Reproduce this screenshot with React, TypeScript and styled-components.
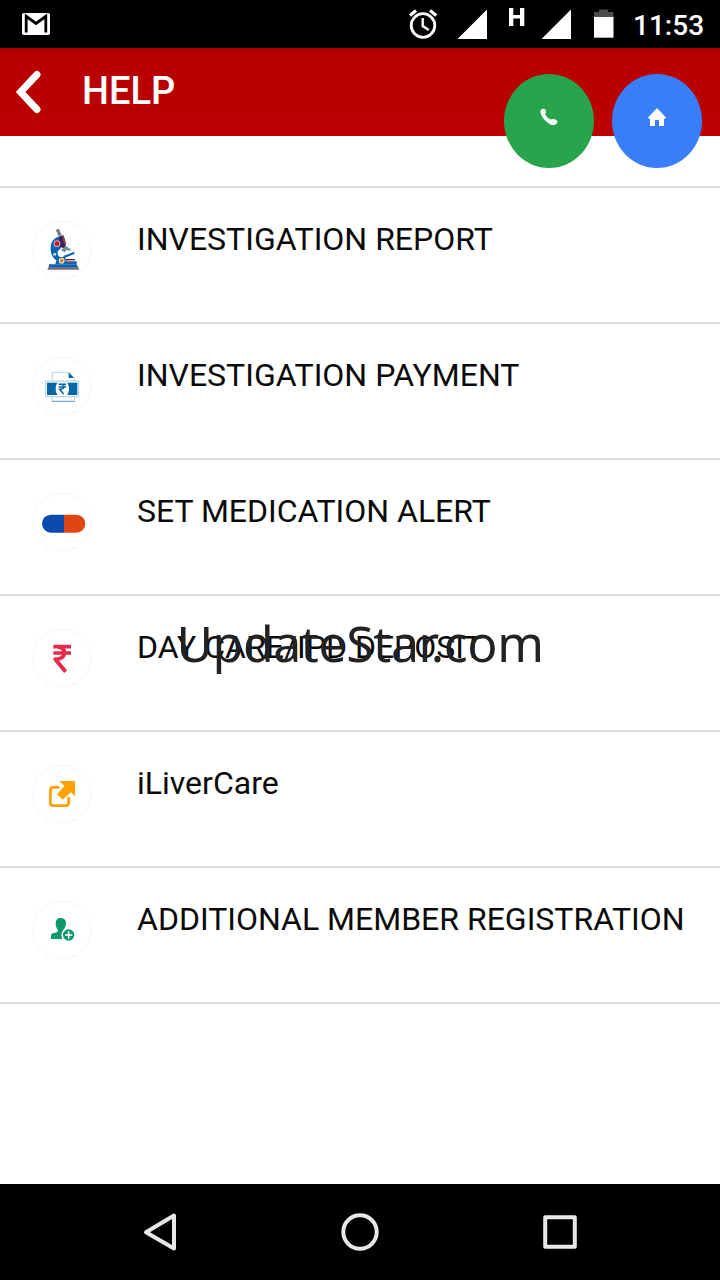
import React from 'react';
import styled, { createGlobalStyle } from 'styled-components';

const GlobalStyle = createGlobalStyle`
  * { box-sizing: border-box; }
  body { margin: 0; background: #fff; }
`;

const Screen = styled.div`
  position: relative;
  display: flex;
  flex-direction: column;
  width: 720px;
  height: 1280px;
  overflow: hidden;
  background: #fff;
  color: #0a0a0a;
  font-family: Roboto, "Liberation Sans", sans-serif;
`;

const StatusBar = styled.div`
  display: flex;
  align-items: center;
  justify-content: space-between;
  height: 48px;
  padding: 0 16px 0 22px;
  background: #000;
  color: #fff;
`;

const StatusGroup = styled.div`
  display: flex;
  align-items: center;
  height: 48px;
`;

const Time = styled.span`
  width: 71px;
  padding-top: 3px;
  font-size: 28px;
  font-weight: 500;
  line-height: 34px;
  white-space: nowrap;
`;

const Header = styled.header`
  display: flex;
  align-items: flex-start;
  height: 88px;
  padding: 0 18px 0 16px;
  background: linear-gradient(#a80000, #b90000 6px, #ba0000);
`;

const BackIcon = styled.svg`
  width: 26px;
  height: 44px;
  margin-top: 22px;
`;

const Title = styled.h1`
  flex: 1;
  margin: 20px 0 0 40px;
  color: #fff;
  font-size: 38px;
  font-weight: 500;
  line-height: 46px;
`;

const RoundButtons = styled.div`
  display: flex;
  gap: 18px;
  padding-top: 26px;
`;

const RoundButton = styled.button<{ $color: string }>`
  display: flex;
  justify-content: center;
  align-items: flex-start;
  width: 90px;
  height: 94px;
  padding: 34px 0 0;
  border: 0;
  border-radius: 50%;
  background: ${(p) => p.$color};
`;

const List = styled.ul`
  flex: 1;
  margin: 50px 0 0;
  padding: 0;
  list-style: none;
  border-top: 2px solid #dcdcdc;
  align-self: stretch;
`;

const Row = styled.li`
  display: flex;
  height: 136px;
  padding: 32px 0 0 32px;
  border-bottom: 2px solid #dcdcdc;
`;

const RowIcon = styled.svg`
  flex: none;
  width: 60px;
  height: 60px;
`;

const Label = styled.span`
  margin-left: 45px;
  font-size: 32px;
  line-height: 38px;
  white-space: nowrap;
`;

const Watermark = styled.div`
  position: absolute;
  top: 609px;
  left: 0;
  width: 720px;
  color: #222;
  font-family: "Noto Sans", "Open Sans", sans-serif;
  font-size: 50px;
  letter-spacing: -0.42px;
  line-height: 68px;
  text-align: center;
`;

const NavBar = styled.nav`
  display: flex;
  justify-content: space-between;
  align-items: center;
  height: 96px;
  padding: 0 140px;
  background: #000;
`;

const NavIcon = styled.svg`
  width: 40px;
  height: 40px;
  fill: none;
  stroke: #e8e8e8;
  stroke-width: 4;
  stroke-linejoin: round;
`;

const Microscope = () => (
  <g>
    <path d="M104 64l8-5 7 16-10 4z" fill="#71808a" />
    <path d="M102 63l9-5" stroke="#555" strokeWidth="4" />
    <path d="M109 80C92 85 85 100 86 119c1 16 8 26 17 32l-3 12h64v-9h-31l-4-13h-15c-7-4-9-11-6-18l9-9z" fill="#0865b4" />
    <path d="M109 80l15-5 8 26-4 14-16-4z" fill="#3a2358" />
    <path d="M120 78l6 2 6 20-5 4z" fill="#8c4560" />
    <path d="M124 138l33-13v7l-32 13z" fill="#0865b4" />
    <path d="M117 121l14-14 14 10-1 6-10-3-6 7z" fill="#718e9f" />
    <circle cx="105" cy="101" r="10" fill="#d9a5b5" />
    <circle cx="105" cy="101" r="7" fill="#c71532" />
    <circle cx="98" cy="133" r="4.500" fill="#d2dce3" />
    <circle cx="119" cy="152" r="9" fill="#f7dfb0" />
    <circle cx="119" cy="152" r="5.500" fill="#d88622" />
    <path d="M132 149h27" stroke="#6a1936" strokeWidth="4" />
    <path d="M139 156h12" stroke="#e33c51" strokeWidth="4" />
    <path d="M81 163h83l4 8H80z" fill="#0865b4" />
    <path d="M80 171h88l4 8H76z" fill="#766e7c" />
  </g>
);

const Payment = () => (
  <g>
    <path d="M91 106V79h49l17 17v10M90 152v14h68v-14" fill="#fff" stroke="#a3cfe3" strokeWidth="2.500" />
    <path d="M140 79v17h16z" fill="#08639d" />
    <path d="M90 166h68" stroke="#368fbc" strokeWidth="2" />
    <path d="M71 105h99v47H71z" fill="#fff" stroke="#8bc6df" strokeWidth="2.500" />
    <path d="M75 110h91v37H75z" fill="#0868a6" />
    <path d="M107 109h28c8 11 8 28 0 39h-28c-8-11-8-28 0-39z" fill="#fff" />
    <path d="M110 115h22M110 123h22M113 115c18-1 17 14 0 15l12 14" fill="none" stroke="#0868a6" strokeWidth="4.500" />
  </g>
);

const Capsule = () => (
  <g>
    <path d="M126 98H87a27 27 0 0 0 0 54h39z" fill="#0c4bad" />
    <path d="M126 98h37a27 27 0 0 1 0 54h-37z" fill="#e04613" />
  </g>
);

const RupeeSign = () => (
  <g fill="none" stroke="#e52b49">
    <path d="M94 86h53M94 105h53" strokeWidth="11" />
    <path d="M108 87c27 0 26 37-8 37l31 37" strokeWidth="12" strokeLinejoin="round" />
  </g>
);

const OpenLink = () => (
  <g>
    <path d="M112 100H94q-9 0-9 9v37q0 9 9 9h37q9 0 9-9v-17" fill="none" stroke="#ffa20a" strokeWidth="8.500" />
    <path d="M112 81h47v46l-12-12-25 22-17-16 22-25z" fill="#ffa20a" stroke="#fff" strokeWidth="5" paintOrder="stroke" />
  </g>
);

const AddMember = () => (
  <g>
    <path d="M117 84c10 0 15 7 15 15 0 10-4 17-8 21v7l10 4v16H87v-9c0-6 4-8 9-9 6-1 12-2 12-9-5-5-7-12-7-21 0-9 6-15 16-15z" fill="#0e9a68" />
    <circle cx="139" cy="135" r="21" fill="#fff" />
    <circle cx="140" cy="135" r="17" fill="#0e9a68" />
    <path d="M140 124v22M129 135h22" stroke="#fff" strokeWidth="4.500" />
  </g>
);

const items = [
  { label: 'INVESTIGATION REPORT', Icon: Microscope },
  { label: 'INVESTIGATION PAYMENT', Icon: Payment },
  { label: 'SET MEDICATION ALERT', Icon: Capsule },
  { label: 'DAY CARE/IPD DEPOSIT', Icon: RupeeSign },
  { label: 'iLiverCare', Icon: OpenLink },
  { label: 'ADDITIONAL MEMBER REGISTRATION', Icon: AddMember },
];

export default function App() {
  return (
    <Screen>
      <GlobalStyle />
      <StatusBar>
        <svg width="28" height="24" viewBox="0 0 28 24">
          <rect y="1" width="28" height="22" rx="2" fill="#fff" />
          <path d="M4.200 20.500V4.300L14 11.500l9.800-7.200v16.200" fill="none" stroke="#000" strokeWidth="2.800" />
        </svg>
        <StatusGroup>
          <svg width="225" height="48" viewBox="408 0 225 48">
            <g fill="none" stroke="#fff" strokeWidth="2.800">
              <circle cx="423" cy="25.500" r="11.800" />
              <path d="M422.700 18v8l6 4" strokeWidth="2.400" />
              <path d="M410 15.500l6-5M430 10.500l6.300 5" strokeWidth="3.200" />
            </g>
            <path d="M487 9.500V39h-29.500zM571 9.500V39h-29.500z" fill="#fff" />
            <path d="M509 8h4.300v7h6.700V8h4.300v18H520v-7.500h-6.700V26H509z" fill="#fff" />
            <path d="M599 9.500h9V12h5.500v6H594v-6h5z" fill="#4b4b4b" />
            <path d="M594 17h19.500v20.700H594z" fill="#fff" />
          </svg>
          <Time>11:53</Time>
        </StatusGroup>
      </StatusBar>
      <Header>
        <BackIcon viewBox="0 0 26 44">
          <path d="M21 4.500L4.500 22 21 39.500" fill="none" stroke="#fff" strokeWidth="7" strokeLinecap="round" />
        </BackIcon>
        <Title>HELP</Title>
        <RoundButtons>
          <RoundButton $color="#28a54c" aria-label="Call">
            <svg width="18" height="18" viewBox="0 0 18 18">
              <path d="M1.200 1.500C2.500.2 4.600.4 5.500 2c.9 1.500.8 2.900-.4 4 1 2.300 2.900 4.300 5.500 5.600 1.800-1 4-.8 5.700.3 1.300.9 1.400 2.400.4 3.700-1.500 1.700-3.900 1.900-6.200.8C5.700 14 2.200 10 .8 5.700.3 4 .2 2.500 1.200 1.500z" fill="#fff" />
            </svg>
          </RoundButton>
          <RoundButton $color="#397ef6" aria-label="Home">
            <svg width="18" height="18" viewBox="0 0 18 18">
              <path d="M9 0l9 9.500-1 1.500h-1v7h-5v-6H7v6H2v-7H1L0 9.500z" fill="#fff" />
            </svg>
          </RoundButton>
        </RoundButtons>
      </Header>
      <List>
        {items.map(({ label, Icon }) => (
          <Row key={label}>
            <RowIcon viewBox="30 30 180 180">
              <circle cx="120" cy="120" r="87" fill="#fff" stroke="#e7e7e7" strokeWidth="2" strokeDasharray="14 5 4 7" />
              <Icon />
            </RowIcon>
            <Label>{label}</Label>
          </Row>
        ))}
      </List>
      <Watermark>UpdateStar.com</Watermark>
      <NavBar>
        <NavIcon viewBox="0 0 40 40"><path d="M6 20.200L34 3.500v33z" /></NavIcon>
        <NavIcon viewBox="0 0 40 40"><circle cx="20" cy="20" r="16.700" /></NavIcon>
        <NavIcon viewBox="0 0 40 40"><rect x="5.200" y="5.200" width="29.600" height="29.600" /></NavIcon>
      </NavBar>
    </Screen>
  );
}
